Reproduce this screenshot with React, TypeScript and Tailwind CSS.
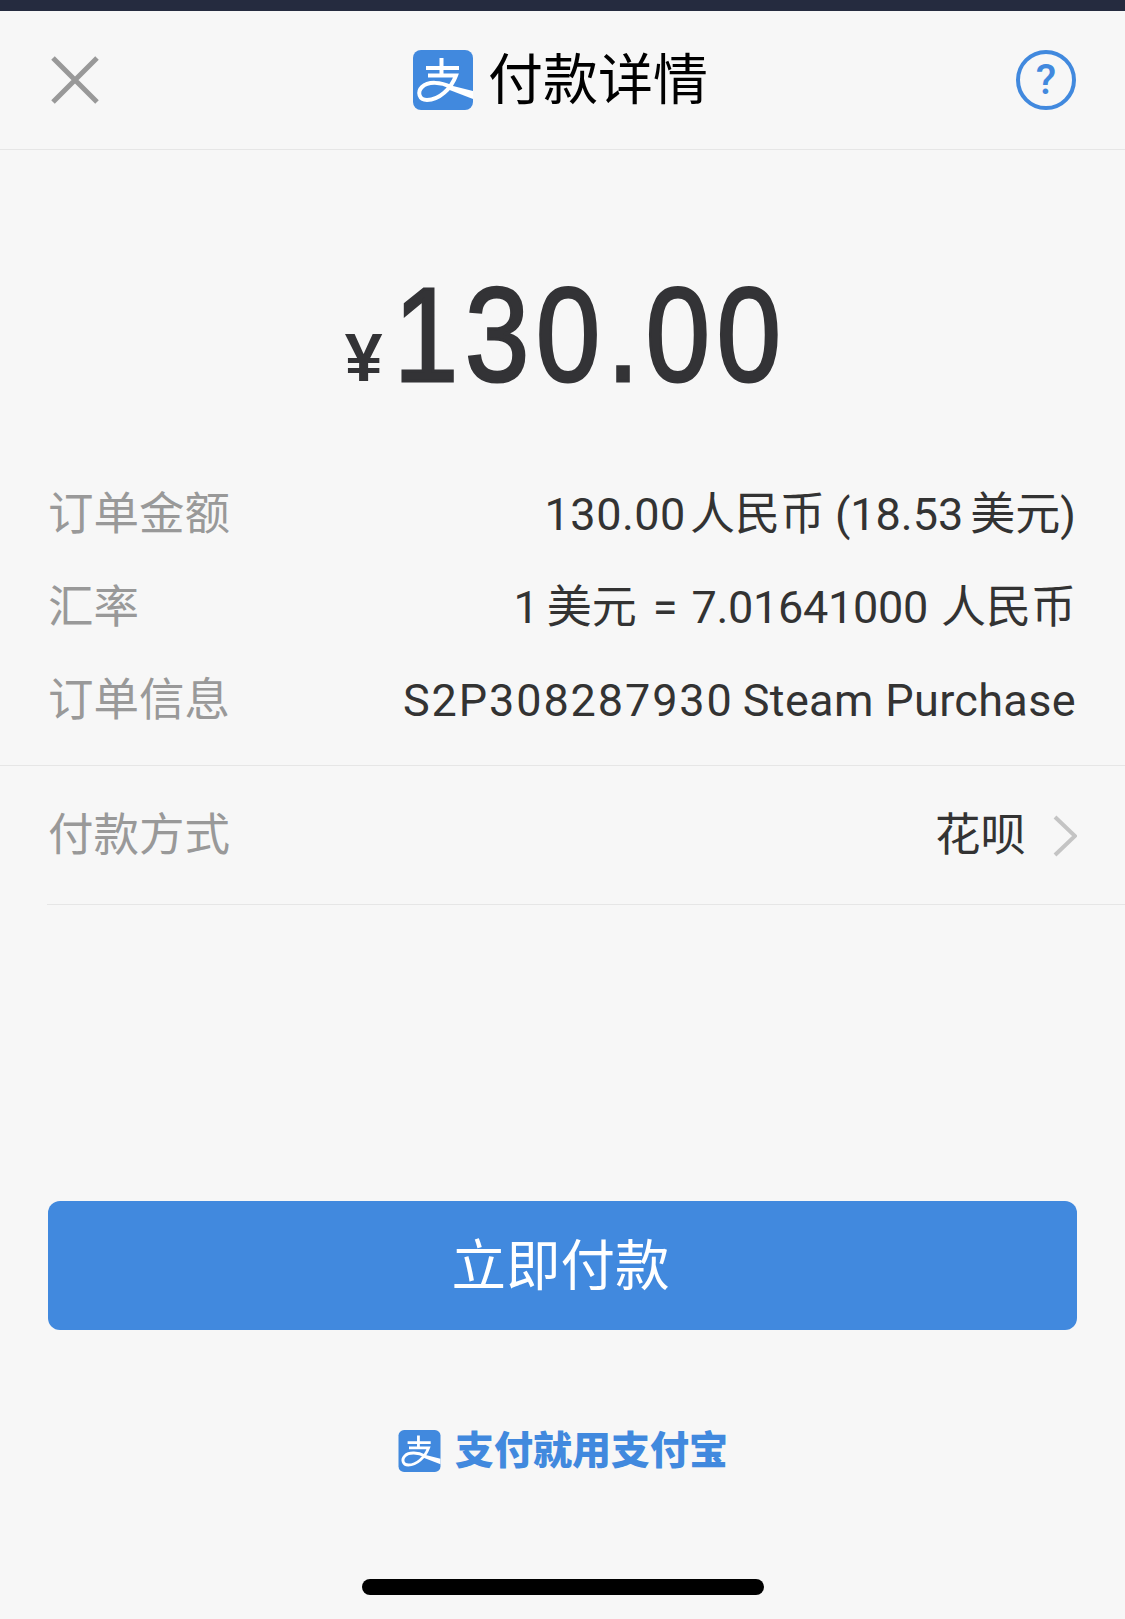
import type { ReactNode } from "react";

const cjk = "font-['Roboto','Noto_Sans_CJK_SC',sans-serif]";

function AlipayLogo({ className }: { className: string }) {
  return (
    <svg className={className} viewBox="0 0 60 60">
      <rect width="60" height="60" rx="8" fill="#4189de" />
      <path d="M13 18H46M28.500 8V24M15 25.500H43C38 39 26 50 14 50C6 50 4 42 9 37C15 31 28 32 38 37" fill="none" stroke="#fff" strokeWidth="4" />
      <path d="M36 35L60 41V49L34 39Z" fill="#fff" />
    </svg>
  );
}

function InfoRow({ label, children }: { label: string; children: ReactNode }) {
  return (
    <div className="flex h-[93px] items-center justify-between pl-[48px] pr-[49px]">
      <span className="mt-[2px] text-[45.500px] text-[#999]">{label}</span>
      <span className="flex items-center text-[45px] text-[#333] whitespace-pre">{children}</span>
    </div>
  );
}

export default function App() {
  return (
    <div className={`flex h-[1619px] w-[1125px] flex-col overflow-hidden bg-[#f7f7f7] ${cjk}`}>
      {/* status strip */}
      <div className="h-[11px] bg-[#252b3f]" />

      {/* header */}
      <header className="flex h-[139px] items-center justify-between border-b border-[#e6e6e6] pl-[50px] pr-[49px]">
        <svg className="h-[50px] w-[50px]" viewBox="0 0 50 50">
          <path d="M3 3L47 47M47 3L3 47" stroke="#999" strokeWidth="5" fill="none" />
        </svg>
        <div className="ml-[5px] flex items-center gap-[15px]">
          <AlipayLogo className="h-[60px] w-[60px]" />
          <span className="text-[55px] leading-none text-black">付款详情</span>
        </div>
        <div className="flex h-[60px] w-[60px] items-center justify-center rounded-full border-[4px] border-[#4189de] text-[42px] font-medium leading-none text-[#4189de]">
          ?
        </div>
      </header>

      {/* amount */}
      <div className="flex h-[318px] items-start justify-center pl-[9px] pt-[117px] font-['Liberation_Sans',sans-serif] text-[#333336]">
        <span className="mr-[11px] mt-[45px] text-[68px] font-bold leading-[90px]">¥</span>
        <span className="mx-[-31px] scale-x-[0.86] text-[134px] leading-[136px] tracking-[8px] [-webkit-text-stroke:3px_#333336]">130.00</span>
      </div>

      {/* order info */}
      <div className="border-b border-[#e6e6e6] pb-[18px]">
        <InfoRow label="订单金额">
          <span className="tracking-[0.5px]">130.00</span>
          <span className="ml-[4px]">人民币</span>
          <span className="ml-[10px]">(18.53</span>
          <span className="ml-[7px]">美元)</span>
        </InfoRow>
        <InfoRow label="汇率">
          <span>1</span>
          <span className="ml-[8px]">美元</span>
          <span className="ml-[16px]">=</span>
          <span className="ml-[14px] tracking-[-0.3px]">7.01641000</span>
          <span className="ml-[13px]">人民币</span>
        </InfoRow>
        <InfoRow label="订单信息">
          <span className="tracking-[1.9px]">S2P308287930</span>
          <span className="ml-[9px] tracking-[0.35px]">Steam Purchase</span>
        </InfoRow>
      </div>

      {/* payment method */}
      <div className="ml-[47px] flex h-[139px] items-center justify-between border-b border-[#e6e6e6] pl-[1px] pr-[48px] pt-[1px]">
        <span className="mt-[2px] text-[45.500px] text-[#999]">付款方式</span>
        <div className="flex items-center gap-[27px]">
          <span className="mt-[2px] text-[45.500px] text-[#333]">花呗</span>
          <svg className="h-[42px] w-[24px]" viewBox="0 0 24 42">
            <path d="M2 2L22 21L2 40" fill="none" stroke="#c4c4c4" strokeWidth="4" />
          </svg>
        </div>
      </div>

      {/* pay button */}
      <button className="mx-[48px] mt-[296px] h-[129px] rounded-[12px] bg-[#4189de] pr-[4px] pt-[3px] text-[54.500px] text-white">
        立即付款
      </button>

      {/* footer brand */}
      <div className="mt-[100px] flex items-center justify-center gap-[14px] pl-[1px]">
        <AlipayLogo className="h-[42px] w-[43px]" />
        <span className="text-[39px] leading-[42px] font-black text-[#4189de]">支付就用支付宝</span>
      </div>

      {/* home indicator */}
      <div className="mx-auto mt-[107px] h-[16px] w-[402px] rounded-full bg-black" />
    </div>
  );
}
